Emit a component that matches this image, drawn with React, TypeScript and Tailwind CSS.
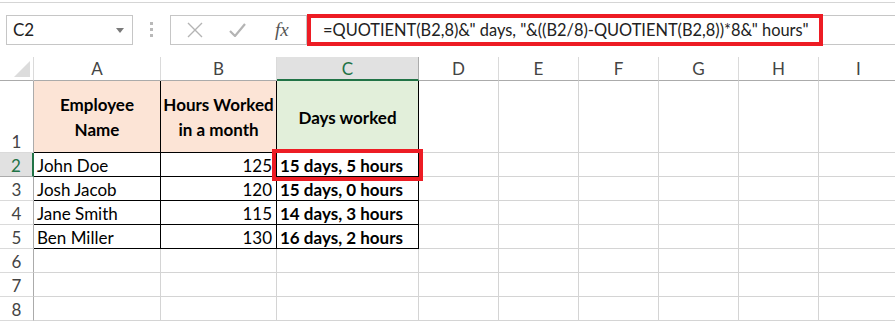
import React from 'react'

const font = { fontFamily: 'Lato, "Open Sans", sans-serif' }

const cols = ['A', 'B', 'C', 'D', 'E', 'F', 'G', 'H', 'I']

const rows = [
  { name: 'John Doe', hours: 125, days: '15 days, 5 hours' },
  { name: 'Josh Jacob', hours: 120, days: '15 days, 0 hours' },
  { name: 'Jane Smith', hours: 115, days: '14 days, 3 hours' },
  { name: 'Ben Miller', hours: 130, days: '16 days, 2 hours' }
]

const FormulaBar = () => (
  <div className="flex h-[30px] items-stretch">
    {/* name box */}
    <div className="ml-[6px] flex w-[127px] items-center justify-between border border-[#c6c6c6] pl-[6px] pr-[8px] text-[17px] text-[#222]">
      <span>C2</span>
      <svg width="8" height="5" viewBox="0 0 8 5">
        <path d="M0 0h8L4 5z" fill="#7a7a7a" />
      </svg>
    </div>
    {/* grip */}
    <div className="flex w-[37px] flex-col items-center gap-[3px] pt-[7px]">
      <div className="h-[3px] w-[3px] bg-[#b9b9b9]" />
      <div className="h-[3px] w-[3px] bg-[#b9b9b9]" />
      <div className="h-[3px] w-[3px] bg-[#b9b9b9]" />
    </div>
    {/* cancel / enter / fx */}
    <div className="flex w-[137px] items-center border border-[#c6c6c6] pl-[15px]">
      <svg width="16" height="16" viewBox="0 0 16 16" className="ml-[1px]">
        <path d="M1 1l14 14M15 1L1 15" stroke="#b4b4b4" strokeWidth="1.4" />
      </svg>
      <svg width="17" height="14" viewBox="0 0 17 14" className="ml-[26px]">
        <path d="M1 8l5 5L16 1" stroke="#b4b4b4" strokeWidth="2.2" fill="none" />
      </svg>
      <span
        className="ml-[29px] text-[19px] italic text-[#555]"
        style={{ fontFamily: '"Liberation Serif", serif' }}
      >
        fx
      </span>
    </div>
    {/* formula */}
    <div className="flex flex-1 items-center border-y border-[#c6c6c6] pl-[16px] text-[16.4px] text-[#222]">
      =QUOTIENT(B2,8)&amp;" days, "&amp;((B2/8)-QUOTIENT(B2,8))*8&amp;" hours"
    </div>
  </div>
)

const Sheet = () => {
  const cells: React.ReactNode[] = []

  // column header row
  cells.push(
    <div key="corner" className="flex items-end justify-end border-r border-b border-r-[#dadada] border-b-[#ababab] pr-[3px] pb-[3px]">
      <svg width="16" height="16" viewBox="0 0 16 16">
        <path d="M16 0v16H0z" fill="#dcdcdc" />
      </svg>
    </div>
  )
  cols.forEach((c) => {
    const sel = c === 'C'
    cells.push(
      <div
        key={'h' + c}
        className={
          sel
            ? 'flex items-center justify-center border-r border-b-2 border-r-[#ababab] border-b-[#217346] bg-[#e1e1e1] pt-[1px] text-[17px] text-[#217346]'
            : 'flex items-center justify-center border-r border-b border-r-[#dadada] border-b-[#ababab] pt-[1px] text-[17px] text-[#444]'
        }
      >
        {c}
      </div>
    )
  })

  for (let r = 1; r <= 8; r++) {
    const sel = r === 2
    cells.push(
      <div
        key={'r' + r}
        className={
          sel
            ? 'flex items-end justify-center border-r-2 border-b border-r-[#217346] border-b-[#ababab] bg-[#e1e1e1] leading-[21px] text-[17px] text-[#217346]'
            : 'flex items-end justify-center border-r border-b border-r-[#ababab] border-b-[#dadada] leading-[21px] text-[17px] text-[#444]'
        }
      >
        {r}
      </div>
    )
    cols.forEach((c, ci) => {
      const inTable = r <= 5 && ci < 3
      const base = inTable
        ? 'border-r border-b border-black'
        : 'border-r border-b border-[#d4d4d4]'
      let content: React.ReactNode = null
      let extra = ''
      if (r === 1 && ci < 3) {
        const heads = ['Employee Name', 'Hours Worked in a month', 'Days worked']
        extra =
          'flex items-center justify-center text-center font-bold leading-[25px] px-[2px] pt-[1px] ' +
          (ci === 2 ? 'bg-[#e2efda]' : 'bg-[#fce4d6]')
        content = heads[ci]
      } else if (r >= 2 && r <= 5 && ci < 3) {
        const d = rows[r - 2]
        if (ci === 0) {
          extra = 'flex items-end pl-[3px] leading-[21px]'
          content = d.name
        } else if (ci === 1) {
          extra = 'flex items-end justify-end pr-[4px] leading-[21px]'
          content = d.hours
        } else {
          extra = 'flex items-end pl-[3px] leading-[21px] font-bold'
          content = d.days
        }
      }
      cells.push(
        <div key={c + r} className={base + ' ' + extra + ' overflow-hidden whitespace-normal text-[17px] text-black'}>
          {content}
        </div>
      )
    })
  }

  return (
    <div className="mt-[12px] grid grid-cols-[34px_127px_116px_142px_80px_80px_80px_80px_80px_80px] grid-rows-[24px_72px_24px_24px_24px_24px_24px_24px_24px]">
      {cells}
    </div>
  )
}

export default function App() {
  return (
    <div className="relative h-[321px] w-[895px] overflow-hidden bg-white" style={font}>
      <div className="mt-[2px] border-t border-[#d5d5d5] pt-[12px]">
        <FormulaBar />
      </div>
      <Sheet />

      {/* annotations */}
      <div className="pointer-events-none absolute left-[307px] top-[14px] h-[32px] w-[516px] border-4 border-[#ed1c24]" />
      <div className="pointer-events-none absolute left-[272px] top-[149px] h-[32px] w-[151px] border-4 border-[#ed1c24]" />
    </div>
  )
}
